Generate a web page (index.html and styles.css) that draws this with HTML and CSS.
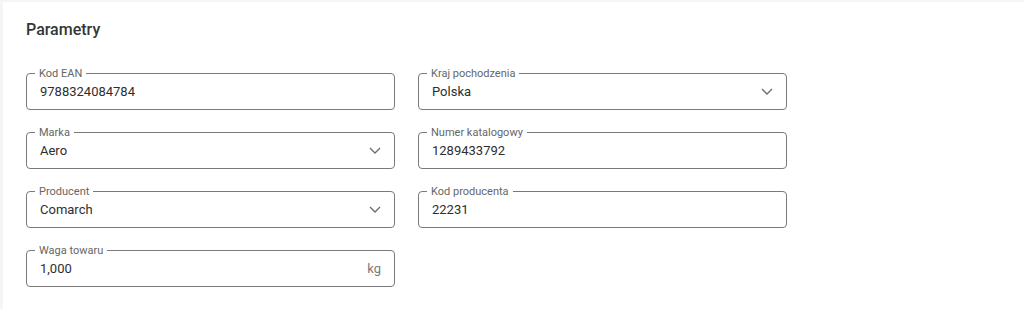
FILE: index.html
```html
<!DOCTYPE html>
<html lang="pl">
<head>
    <meta charset="UTF-8">
    <meta name="viewport" content="width=device-width, initial-scale=1.0">
    <title>Parametry</title>
    <link rel="stylesheet" href="styles.css">
</head>
<body>
    <div class="card">
        <h2>Parametry</h2>
        <div class="fields">
            <fieldset class="field">
                <legend>Kod EAN</legend>
                <div class="value">9788324084784</div>
            </fieldset>
            <fieldset class="field">
                <legend>Kraj pochodzenia</legend>
                <div class="value">Polska
                    <svg class="chevron" width="12" height="7" viewBox="0 0 12 7"><path d="M1 1l5 5 5-5" fill="none" stroke="#6b6b6b" stroke-width="1.3"/></svg>
                </div>
            </fieldset>
            <fieldset class="field">
                <legend>Marka</legend>
                <div class="value">Aero
                    <svg class="chevron" width="12" height="7" viewBox="0 0 12 7"><path d="M1 1l5 5 5-5" fill="none" stroke="#6b6b6b" stroke-width="1.3"/></svg>
                </div>
            </fieldset>
            <fieldset class="field">
                <legend>Numer katalogowy</legend>
                <div class="value">1289433792</div>
            </fieldset>
            <fieldset class="field">
                <legend>Producent</legend>
                <div class="value">Comarch
                    <svg class="chevron" width="12" height="7" viewBox="0 0 12 7"><path d="M1 1l5 5 5-5" fill="none" stroke="#6b6b6b" stroke-width="1.3"/></svg>
                </div>
            </fieldset>
            <fieldset class="field">
                <legend>Kod producenta</legend>
                <div class="value">22231</div>
            </fieldset>
            <fieldset class="field">
                <legend>Waga towaru</legend>
                <div class="value">1,000 <span class="unit">kg</span></div>
            </fieldset>
        </div>
    </div>
</body>
</html>
```

FILE: styles.css
```css
html, body {
    height: 100%;
}
body {
    margin: 0;
    padding: 2px 0 0 3px;
    box-sizing: border-box;
    background-color: #f4f5f7;
    font-family: Roboto, "Liberation Sans", sans-serif;
    color: #222;
}
.card {
    background: #fff;
    height: 100%;
    padding: 18px 23px 0 23px;
    box-sizing: border-box;
}
h2 {
    margin: 0 0 27px 0;
    font-size: 16px;
    line-height: 20px;
    font-weight: 500;
    color: #363636;
}
.fields {
    display: grid;
    grid-template-columns: 369px 369px;
    column-gap: 23px;
    row-gap: 16px;
}
.field {
    margin: 0;
    padding: 0 13px 7px 13px;
    border: 1px solid #7a7a7a;
    border-radius: 4px;
    min-width: 0;
}
.field legend {
    margin-left: -5px;
    padding: 0 4px;
    font-size: 11px;
    line-height: 13px;
    color: #666;
}
.value {
    display: flex;
    align-items: center;
    justify-content: space-between;
    height: 22px;
    font-size: 13px;
    color: #2e2e2e;
}
.unit {
    color: #7a7a7a;
    font-size: 13px;
}
```
